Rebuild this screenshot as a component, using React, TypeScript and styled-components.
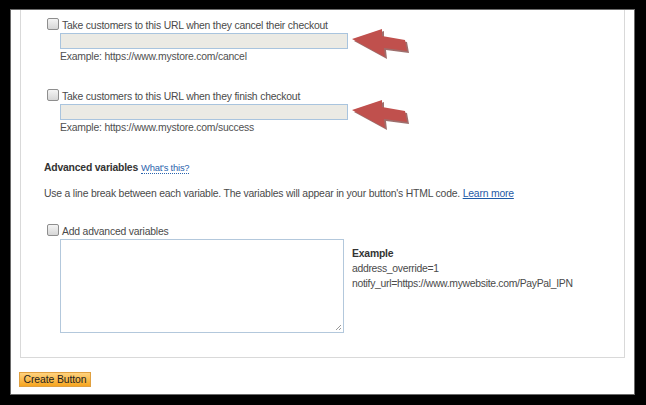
import React from 'react'
import styled, { createGlobalStyle } from 'styled-components'

const Global = createGlobalStyle`
  html, body {
    margin: 0;
    padding: 0;
    background: #000;
  }
`

const Frame = styled.div`
  width: 646px;
  height: 405px;
  box-sizing: border-box;
  padding: 9px 0 0 10px;
  background: #000;
  font-family: 'Liberation Sans', Arial, sans-serif;
  letter-spacing: -0.2px;
  color: #4a4a4a;
`

const Window = styled.div`
  width: 625px;
  height: 386px;
  box-sizing: border-box;
  background: #fff;
  border: 1px solid #6a6a6a;
  overflow: hidden;
`

const Panel = styled.div`
  margin-left: 9px;
  width: 605px;
  height: 348px;
  box-sizing: border-box;
  border: 1px solid #d9d9d9;
  border-top: none;
  padding: 8px 0 0 23px;
`

const CheckRow = styled.label<{ $top: number }>`
  display: flex;
  align-items: center;
  gap: 3px;
  height: 14px;
  margin-top: ${p => p.$top}px;
  padding-left: 3px;
  font-size: 10.4px;
`

const Box = styled.span`
  width: 10px;
  height: 10px;
  border: 1px solid #8e8e8e;
  border-radius: 2px;
  background: linear-gradient(#f4f4f4, #d6d6d6);
  margin-top: -2px;
`

const Field = styled.div`
  position: relative;
  padding-left: 16px;
`

const UrlInput = styled.div`
  margin-top: 1px;
  width: 288px;
  height: 16px;
  box-sizing: border-box;
  border: 1px solid #a9c4de;
  background: #ebeae4;
`

const Hint = styled.div`
  margin-top: 1px;
  line-height: 14px;
  font-size: 10.4px;
  color: #505050;
`

const Arrow = styled.svg`
  position: absolute;
  left: 308px;
  top: -5px;
`

const Heading = styled.div`
  margin-top: 26px;
  line-height: 14px;
  font-size: 10.4px;
  font-weight: bold;
  color: #333;
`

const Help = styled.span`
  font-weight: normal;
  font-size: 9.4px;
  color: #2a63ad;
  border-bottom: 1px dotted #2a63ad;
  margin-left: 3px;
`

const Note = styled.div`
  margin-top: 12px;
  line-height: 14px;
  font-size: 10.4px;
`

const Link = styled.span`
  color: #1f5aa6;
  text-decoration: underline;
`

const VarRow = styled.div`
  display: flex;
  gap: 8px;
  margin-top: 1px;
  padding-left: 16px;
`

const Area = styled.div`
  position: relative;
  width: 284px;
  height: 94px;
  box-sizing: border-box;
  border: 1px solid #b3c8dc;
  background: #fff;
`

const Grip = styled.svg`
  position: absolute;
  right: 1px;
  bottom: 1px;
`

const Sample = styled.div`
  padding-top: 7px;
  font-size: 10.4px;
  line-height: 15px;
  letter-spacing: -0.3px;
  color: #4a4a4a;
  strong {
    display: block;
    color: #333;
    letter-spacing: -0.2px;
  }
`

const CreateButton = styled.button`
  display: block;
  margin: 14px 0 0 8px;
  width: 72px;
  height: 15px;
  padding: 0;
  border: 1px solid #e0a040;
  background: linear-gradient(#ffd27e, #f6a51f);
  font-family: 'Liberation Sans', Arial, sans-serif;
  font-size: 10.4px;
  letter-spacing: -0.1px;
  line-height: 13px;
  color: #1d1d1d;
`

function RedArrow() {
  return (
    <Arrow width="64" height="34" viewBox="0 0 64 34">
      <polygon points="2,13 32,3 32,10 55,14 57,25 34,22 35,31" fill="#7d3e3b" opacity="0.75" />
      <polygon points="0,11 30,1 30,8 53,12 55,23 32,20 33,29" fill="#c0504d" />
    </Arrow>
  )
}

function UrlField({ label, hint, top }: { label: string; hint: string; top: number }) {
  return (
    <>
      <CheckRow $top={top}>
        <Box />
        {label}
      </CheckRow>
      <Field>
        <UrlInput />
        <Hint>{hint}</Hint>
        <RedArrow />
      </Field>
    </>
  )
}

export default function App() {
  return (
    <Frame>
      <Global />
      <Window>
        <Panel>
          <UrlField
            top={0}
            label="Take customers to this URL when they cancel their checkout"
            hint="Example: https://www.mystore.com/cancel"
          />
          <UrlField
            top={25}
            label="Take customers to this URL when they finish checkout"
            hint="Example: https://www.mystore.com/success"
          />
          <Heading>
            Advanced variables<Help>What's this?</Help>
          </Heading>
          <Note>
            Use a line break between each variable. The variables will appear in your button's HTML code.{' '}
            <Link>Learn more</Link>
          </Note>
          <CheckRow $top={23}>
            <Box />
            Add advanced variables
          </CheckRow>
          <VarRow>
            <Area>
              <Grip width="7" height="7" viewBox="0 0 7 7">
                <path d="M6 1 L1 6 M6 4 L4 6" stroke="#999" strokeWidth="1" />
              </Grip>
            </Area>
            <Sample>
              <strong>Example</strong>
              address_override=1
              <br />
              notify_url=https://www.mywebsite.com/PayPal_IPN
            </Sample>
          </VarRow>
        </Panel>
        <CreateButton>Create Button</CreateButton>
      </Window>
    </Frame>
  )
}
